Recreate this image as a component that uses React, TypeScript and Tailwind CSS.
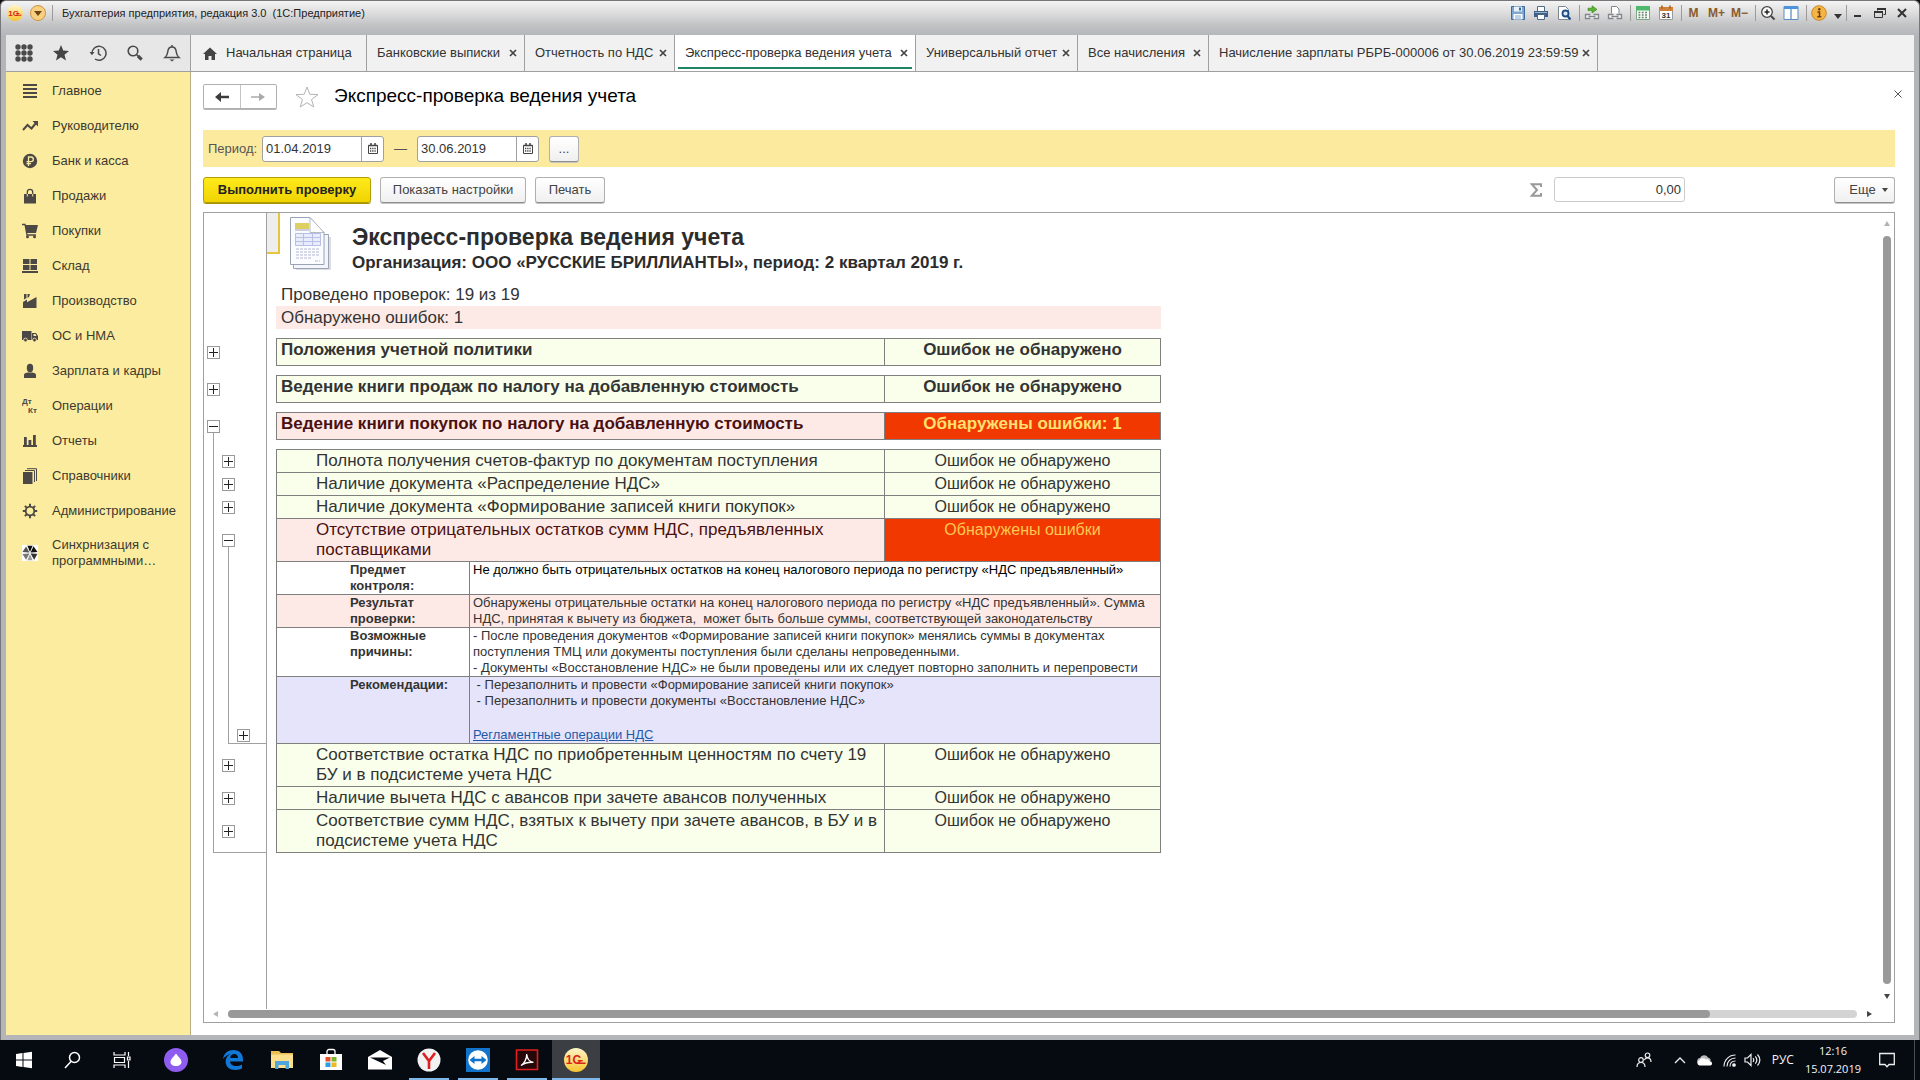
import type { ReactNode } from 'react';
import clsx from 'clsx';

type Slot = 'none' | 'plus' | 'plus-low' | 'minus' | 'line' | 'end';

interface IconProps {
  className?: string;
}

/* ---------- window title bar ---------- */

function LogoIcon({ className = 'size-4' }: IconProps) {
  return (
    <svg viewBox="0 0 20 20" className={className}>
      <defs>
        <linearGradient id="logo-fill" x1="0" y1="0" x2="0" y2="1">
          <stop offset="0" stopColor="#fff6c8" />
          <stop offset="1" stopColor="#f7c32e" />
        </linearGradient>
      </defs>
      <circle cx="10" cy="10" r="10" fill="url(#logo-fill)" />
      <text x="1.500" y="13.500" fontSize="10" fontWeight="bold" fontFamily="Liberation Sans" fill="#d8231c">1С</text>
      <path d="M11 12.700h7M11.500 10.700h4" stroke="#d8231c" strokeWidth="1.300" />
    </svg>
  );
}

function SaveIcon() {
  return (
    <svg viewBox="0 0 16 16" className="size-4">
      <path d="M1.500 1.500h13v13h-13z" fill="#7fa6d0" stroke="#3f6a9c" />
      <path d="M4 1.500h8v5H4z" fill="#e9f2fb" />
      <path d="M9 2.500h2v3H9z" fill="#3f6a9c" />
      <path d="M3.500 9h9v5.500h-9z" fill="#fff" />
      <path d="M5 11h6M5 13h6" stroke="#7fa6d0" />
    </svg>
  );
}

function PrinterIcon() {
  return (
    <svg viewBox="0 0 16 16" className="size-4">
      <path d="M4.500 1.500h7v5h-7z" fill="#fff" stroke="#4d6b8a" />
      <path d="M1 6h14v6H1z" fill="#3d5f85" />
      <path d="M2 7.500h12" stroke="#9db6d0" />
      <path d="M4.500 9.500h7v5h-7z" fill="#fff" stroke="#4d6b8a" />
    </svg>
  );
}

function PreviewIcon() {
  return (
    <svg viewBox="0 0 16 16" className="size-4">
      <path d="M2.500 1.500h7l3 3v10h-10z" fill="#fff" stroke="#7b8794" />
      <circle cx="9.500" cy="8.500" r="3" fill="#d9e9f8" stroke="#1d4e86" strokeWidth="1.800" />
      <path d="m11.500 11 3 3.500" stroke="#1d4e86" strokeWidth="2.200" />
    </svg>
  );
}

function LinkToIcon() {
  return (
    <svg viewBox="0 0 16 16" className="size-4">
      <path d="M4 3.200h4V.8L13 4.400 8 8V5.600H4z" fill="#5cb531" stroke="#35801a" strokeWidth=".6" />
      <path d="M2 9.500h12v4H2z" fill="#f4f4f4" />
      <path d="M6.500 9.500h-5v4h5M9.500 9.500h5v4h-5M4.500 11.500h7" fill="none" stroke="#80868c" strokeWidth="1.300" />
    </svg>
  );
}

function LinkPageIcon() {
  return (
    <svg viewBox="0 0 16 16" className="size-4">
      <path d="M4.500 8.500V1.500h5l2.500 2.500v4.500" fill="#fff" stroke="#80868c" />
      <path d="M2 9.500h12v4H2z" fill="#f4f4f4" />
      <path d="M6.500 9.500h-5v4h5M9.500 9.500h5v4h-5M4.500 11.500h7" fill="none" stroke="#80868c" strokeWidth="1.300" />
    </svg>
  );
}

function CalcIcon() {
  return (
    <svg viewBox="0 0 16 16" className="size-4">
      <path d="M1.500 1.500h13v13h-13z" fill="#f4faf4" stroke="#7fa488" />
      <path d="M1 1h14v4.500H1z" fill="#4fb86a" />
      <path d="M3.500 7.500h9M3.500 10h9M3.500 12.500h9" stroke="#5f7f68" strokeWidth="1.300" strokeDasharray="1.800 1.500" />
    </svg>
  );
}

function CalendarColorIcon() {
  return (
    <svg viewBox="0 0 16 16" className="size-4">
      <path d="M1.500 2.500h13v12h-13z" fill="#fff" stroke="#9a9a9a" />
      <path d="M1 2h14v4H1z" fill="#d08038" />
      <path d="M4 .5v3M12 .5v3" stroke="#a85c1c" strokeWidth="1.500" />
      <text x="8" y="13.300" textAnchor="middle" fontSize="8" fontFamily="Liberation Sans" fill="#333">31</text>
    </svg>
  );
}

function ZoomIcon() {
  return (
    <svg viewBox="0 0 16 16" className="size-4">
      <circle cx="7" cy="7" r="5.300" fill="#fafafa" stroke="#444" strokeWidth="1.300" />
      <path d="M4.500 7h5M7 4.500v5" stroke="#222" strokeWidth="1.500" />
      <path d="m11 11 3.500 3.500" stroke="#444" strokeWidth="2" />
    </svg>
  );
}

function PanelsIcon() {
  return (
    <svg viewBox="0 0 16 16" className="size-4">
      <path d="M1 1.500h14v13H1z" fill="#fff" stroke="#5b8fc4" />
      <path d="M1 1h14v3H1z" fill="#4c92dc" />
      <path d="M8 4v10" stroke="#5b8fc4" strokeWidth="1.300" />
    </svg>
  );
}

function InfoIcon() {
  return (
    <svg viewBox="0 0 16 16" className="size-4">
      <circle cx="8" cy="8" r="7.300" fill="#f5b544" stroke="#c9862a" />
      <circle cx="8.300" cy="4.300" r="1.200" fill="#6b3f0c" />
      <path d="M6.500 7h2v4.500M6.300 11.700h4" fill="none" stroke="#6b3f0c" strokeWidth="1.500" />
    </svg>
  );
}

function BarSeparator() {
  return <span className="h-4 w-px bg-[#9c9c9c]" />;
}

function ToolButton({ label, width = 'w-[23px]', children }: { label: string; width?: string; children: ReactNode }) {
  return (
    <button type="button" aria-label={label} className={clsx('flex h-5 items-center justify-center text-[12px] font-bold text-[#8a5a2c]', width)}>
      {children}
    </button>
  );
}

function TitleBar() {
  return (
    <header className="flex h-[34px] shrink-0 items-center justify-between pb-[10px] pl-px pr-[1px] text-[11px] text-[#222]">
      <div className="flex items-center">
        <LogoIcon className="size-4" />
        <button type="button" aria-label="Меню" className="ml-[7px] flex size-4 items-center justify-center rounded-full border border-[#cf9340] bg-[#f9cf80]">
          <svg viewBox="0 0 8 5" className="w-2">
            <path d="M0 0h8L4 5z" fill="#6b4618" />
          </svg>
        </button>
        <span className="mx-[6px] h-4 w-px bg-[#9c9c9c]" />
        <span className="ml-[3px] whitespace-pre">Бухгалтерия предприятия, редакция 3.0  (1С:Предприятие)</span>
      </div>
      <div className="flex items-center">
        <ToolButton label="Сохранить"><SaveIcon /></ToolButton>
        <ToolButton label="Печать"><PrinterIcon /></ToolButton>
        <ToolButton label="Просмотр"><PreviewIcon /></ToolButton>
        <span className="w-1" />
        <BarSeparator />
        <ToolButton label="Перейти по ссылке"><LinkToIcon /></ToolButton>
        <ToolButton label="Получить ссылку"><LinkPageIcon /></ToolButton>
        <span className="w-1" />
        <BarSeparator />
        <ToolButton label="Калькулятор"><CalcIcon /></ToolButton>
        <ToolButton label="Календарь"><CalendarColorIcon /></ToolButton>
        <span className="w-1" />
        <BarSeparator />
        <ToolButton label="Память">M</ToolButton>
        <ToolButton label="Прибавить">M+</ToolButton>
        <ToolButton label="Вычесть">M−</ToolButton>
        <span className="w-1" />
        <BarSeparator />
        <ToolButton label="Масштаб"><ZoomIcon /></ToolButton>
        <ToolButton label="Панели"><PanelsIcon /></ToolButton>
        <span className="w-1" />
        <BarSeparator />
        <ToolButton label="Справка"><InfoIcon /></ToolButton>
        <svg viewBox="0 0 8 5" className="mx-[4px] mt-[6px] w-2">
          <path d="M0 0h8L4 5z" fill="#333" />
        </svg>
        <BarSeparator />
        <ToolButton label="Свернуть" width="w-[22px]">
          <svg viewBox="0 0 12 12" className="size-3"><path d="M2 9h7" stroke="#333" strokeWidth="2" /></svg>
        </ToolButton>
        <ToolButton label="Восстановить" width="w-[22px]">
          <svg viewBox="0 0 12 12" className="size-3">
            <path d="M3.500 3.500v-2h8v6h-2M.500 4.500h8v6h-8z" fill="none" stroke="#333" />
            <path d="M0 5h9M3 2h9" stroke="#333" strokeWidth="2" />
          </svg>
        </ToolButton>
        <ToolButton label="Закрыть" width="w-[22px]">
          <svg viewBox="0 0 12 12" className="size-3"><path d="m2 2 8 8M10 2l-8 8" stroke="#333" strokeWidth="2" /></svg>
        </ToolButton>
      </div>
    </header>
  );
}

/* ---------- tabs ---------- */

const tabs = [
  { title: 'Банковские выписки', width: 'w-[158px]' },
  { title: 'Отчетность по НДС', width: 'w-[150px]' },
  { title: 'Экспресс-проверка ведения учета', width: 'w-[241px]', active: true },
  { title: 'Универсальный отчет', width: 'w-[162px]' },
  { title: 'Все начисления', width: 'w-[131px]' },
  { title: 'Начисление зарплаты РБРБ-000006 от 30.06.2019 23:59:59', width: 'w-[389px]' },
];

function CrossIcon({ className = 'size-2' }: IconProps) {
  return (
    <svg viewBox="0 0 8 8" className={className}>
      <path d="m1 1 6 6M7 1 1 7" stroke="#444" strokeWidth="1.700" />
    </svg>
  );
}

function TabStrip() {
  return (
    <div className="flex h-[37px] shrink-0 border-b border-[#a0a0a0] bg-[#f1f1f1] text-[13px] text-[#333]">
      <div className="flex w-[185px] shrink-0 items-center justify-between border-r border-[#a0a0a0] bg-[#e7e7e7] pl-[9px] pr-[9px]">
        <button type="button" aria-label="Разделы">
          <svg viewBox="0 0 18 18" className="size-[18px]" fill="#4a4a4a">
            {[3, 9, 15].map(y => [3, 9, 15].map(x => <circle key={`${x}-${y}`} cx={x} cy={y} r="2.700" />))}
          </svg>
        </button>
        <button type="button" aria-label="Избранное">
          <svg viewBox="0 0 18 18" className="size-[18px]">
            <path d="m9 1 2.200 5.500 5.800.4-4.500 3.800 1.500 5.800L9 13.300l-5 3.200 1.500-5.800L1 6.900l5.800-.4z" fill="#444" />
          </svg>
        </button>
        <button type="button" aria-label="История">
          <svg viewBox="0 0 18 18" className="size-[18px]" fill="none" stroke="#4a4a4a" strokeWidth="1.500">
            <path d="M3 9.500A7 7 0 1 1 6 15" />
            <path d="M9.500 5v4.800l2.500 1.700" />
            <path d="M.5 8h5L3 11.300z" fill="#4a4a4a" stroke="none" />
          </svg>
        </button>
        <button type="button" aria-label="Поиск">
          <svg viewBox="0 0 18 18" className="size-[18px]" fill="none" stroke="#4a4a4a">
            <circle cx="7" cy="7" r="4.800" strokeWidth="1.600" />
            <path d="m10.500 10.500 2 2" strokeWidth="1.600" />
            <path d="m12 12 3.700 3.700" strokeWidth="3.200" />
          </svg>
        </button>
        <button type="button" aria-label="Уведомления">
          <svg viewBox="0 0 18 18" className="size-[18px]" fill="none" stroke="#4a4a4a" strokeWidth="1.500">
            <path d="M2 13.500c2.500-2 2.500-3.500 2.800-6C5.100 4.500 6.500 3 9 3s3.900 1.500 4.200 4.500c.3 2.500.3 4 2.800 6z" />
            <path d="M9 1v2" />
            <path d="M6.500 15.500h5L9 17.500z" fill="#4a4a4a" stroke="none" />
          </svg>
        </button>
      </div>
      <a href="#home" className="flex w-[176px] shrink-0 items-center gap-[9px] border-r border-[#a0a0a0] pl-3">
        <svg viewBox="0 0 14 13" className="h-[13px] w-[14px]">
          <path d="M7 .5 14 7h-2v6H8.500V9h-3v4H2V7H0z" fill="#444" />
        </svg>
        Начальная страница
      </a>
      {tabs.map(tab => (
        <div
          key={tab.title}
          className={clsx('relative flex shrink-0 items-center justify-between border-r border-[#a0a0a0] pl-[10px] pr-[7px] whitespace-nowrap', tab.width, tab.active && 'bg-white')}
        >
          <a href="#tab">{tab.title}</a>
          <button type="button" aria-label="Закрыть вкладку"><CrossIcon /></button>
          {tab.active && <span className="absolute bottom-[2px] left-[3px] right-[3px] h-[2px] bg-[#1f8565]" />}
        </div>
      ))}
    </div>
  );
}

/* ---------- sections panel ---------- */

const ink = '#4c4846';

const sections: { title: string; icon: ReactNode }[] = [
  { title: 'Главное', icon: <path d="M1 2h14M1 6h14M1 10h14M1 14h14" stroke={ink} strokeWidth="2" /> },
  {
    title: 'Руководителю',
    icon: (
      <>
        <path d="m1 12 4.500-5 4 3.500L14 5" fill="none" stroke={ink} strokeWidth="2" />
        <path d="M10.500 3H16v5.500z" fill={ink} />
      </>
    ),
  },
  {
    title: 'Банк и касса',
    icon: (
      <>
        <circle cx="8" cy="8" r="7.200" fill={ink} />
        <path d="M6.500 13V4H9a2.300 2.300 0 0 1 0 4.700H4.500M4.500 10.700H9" fill="none" stroke="#fcec9f" strokeWidth="1.300" />
      </>
    ),
  },
  {
    title: 'Продажи',
    icon: (
      <>
        <path d="M2 6h12v9.500H2z" fill={ink} />
        <path d="M5.300 8V4a2.700 2.700 0 0 1 5.400 0v4" fill="none" stroke={ink} strokeWidth="1.300" />
        <path d="M5.300 6v2.500M10.700 6v2.500" stroke="#fcec9f" />
      </>
    ),
  },
  {
    title: 'Покупки',
    icon: (
      <>
        <path d="M3 2h13l-2 8H4.500z" fill={ink} />
        <path d="M0 1.500h3l2 10.500h9" fill="none" stroke={ink} strokeWidth="1.300" />
        <circle cx="5.500" cy="13.800" r="1.500" fill={ink} />
        <circle cx="12.500" cy="13.800" r="1.500" fill={ink} />
      </>
    ),
  },
  { title: 'Склад', icon: <path d="M1 1h6.500v5H1zM8.500 1H15v5H8.500zM1 7h6.500v5H1zM8.500 7H15v5H8.500zM0 13h16v2H0z" fill={ink} /> },
  { title: 'Производство', icon: <path d="M1 15V9l4-2.500v2.700L14.500 4v11zM2 1h2.500v4L2 6.500zM5.500 1H8l-1 3-1.500 1z" fill={ink} /> },
  {
    title: 'ОС и НМА',
    icon: (
      <>
        <path d="M0 3h9.500v9H0zM10 5h4l2 3v4h-6z" fill={ink} />
        <path d="M11.500 6h2l1 2h-3z" fill="#fcec9f" />
        <circle cx="3.500" cy="12" r="1.900" fill={ink} stroke="#fcec9f" strokeWidth=".8" />
        <circle cx="12.500" cy="12" r="1.900" fill={ink} stroke="#fcec9f" strokeWidth=".8" />
      </>
    ),
  },
  {
    title: 'Зарплата и кадры',
    icon: (
      <>
        <ellipse cx="8" cy="5" rx="3.200" ry="4.200" fill={ink} />
        <path d="M2 15v-3c0-2 3-2.500 6-2.500s6 .5 6 2.500v3z" fill={ink} />
      </>
    ),
  },
  {
    title: 'Операции',
    icon: (
      <g fontFamily="Liberation Sans" fontSize="8" fontWeight="bold" fill={ink}>
        <text x="0" y="6">Дт</text>
        <text x="6" y="15">Кт</text>
      </g>
    ),
  },
  { title: 'Отчеты', icon: <path d="M2 4h2.800v8H2zM6.500 7h2.800v5H6.500zM11 2h2.800v10H11zM1 12h14v2H1z" fill={ink} /> },
  {
    title: 'Справочники',
    icon: (
      <>
        <path d="M1 4h9.500v12H1z" fill={ink} />
        <path d="M3 2.500h9.500V14M5 .7h9.500V13" fill="none" stroke={ink} />
      </>
    ),
  },
  {
    title: 'Администрирование',
    icon: (
      <>
        <circle cx="8" cy="8" r="4.300" fill="none" stroke={ink} strokeWidth="1.800" />
        <path d="M8 .8V4M8 12v3.200M.8 8H4M12 8h3.200M2.900 2.900l2.200 2.200M10.900 10.900l2.200 2.200M13.100 2.900l-2.200 2.200M5.100 10.900l-2.200 2.200" stroke={ink} strokeWidth="2" />
      </>
    ),
  },
  {
    title: 'Синхрнизация с программными…',
    icon: (
      <>
        <path d="M0 0h16v16H0z" fill="#fff" />
        <path d="M8 8 5 .8h6zM8 8l3.500-6.800L15.500 7z" fill="#111" />
        <path d="m8 8 7.500.7-3.300 6z" fill="#333" />
        <path d="m8 8 3 7.300H5z" fill="#999" />
        <path d="m8 8-4 6.800L.5 9z" fill="#777" />
        <path d="M8 8 .5 7 4 1.500z" fill="#555" />
        <path d="m5 .8 6 14.500M11 .8 5 15.300M.5 8h15" stroke="#fff" strokeWidth=".8" />
      </>
    ),
  },
];

function SectionsPanel() {
  return (
    <nav className="w-[185px] shrink-0 border-r border-[#b8ae84] bg-[#fcec9f] pt-[1px] text-[13px] text-[#3d3a30]">
      {sections.map(section => (
        <a key={section.title} href="#section" className="flex min-h-[35px] items-center py-[9px] pl-4 leading-4">
          <svg viewBox="0 0 16 16" className="mr-[14px] size-4 shrink-0">{section.icon}</svg>
          <span className="w-[125px]">{section.title}</span>
        </a>
      ))}
    </nav>
  );
}

/* ---------- form header ---------- */

const buttonBase = 'flex h-[26px] items-center justify-center rounded-[3px] border border-[#b0b0b0] border-b-[#8f8f8f] bg-linear-to-b from-white to-[#f0f0f0] text-[13px] text-[#444] shadow-[0_1px_0_#c4c4c4]';

function DateField({ id, label, value }: { id: string; label: string; value: string }) {
  return (
    <div className="flex h-[26px] w-[122px] items-center rounded-[3px] border border-[#a0a0a0] bg-white">
      <input id={id} aria-label={label} defaultValue={value} className="h-full w-[99px] border-r border-[#a0a0a0] pl-[3px] text-[13px] text-[#333] outline-none" />
      <button type="button" aria-label="Выбрать дату" className="flex h-full flex-1 items-center justify-center">
        <svg viewBox="0 0 10 11" className="h-[11px] w-[10px]">
          <path d="M.5 2.500h9v8h-9z" fill="none" stroke="#444" />
          <path d="M.5 2.500h9M3 0v2M7 0v2" stroke="#444" strokeWidth="1.500" />
          <path d="M2 5.500h6M2 8h6" stroke="#444" strokeWidth="1.300" strokeDasharray="1.300 .9" />
        </svg>
      </button>
    </div>
  );
}

function FormHeader() {
  return (
    <div className="flex h-[58px] items-center pb-[9px]">
      <div className="flex h-[25px] w-[74px] rounded-[2px] border border-[#b0b0b0] shadow-[0_1px_0_#b4b4b4]">
        <button type="button" aria-label="Назад" className="flex flex-1 items-center justify-center border-r border-[#c4c4c4]">
          <svg viewBox="0 0 14 10" className="h-[10px] w-[14px]"><path d="M6 0v3.700h8v2.600H6V10L0 5z" fill="#3c3c3c" /></svg>
        </button>
        <button type="button" aria-label="Вперед" className="flex flex-1 items-center justify-center">
          <svg viewBox="0 0 14 10" className="h-[10px] w-[14px]"><path d="M8 1v3.200H0v1.600h8V9l6-4z" fill="#aaa" /></svg>
        </button>
      </div>
      <button type="button" aria-label="В избранное" className="ml-[18px]">
        <svg viewBox="0 0 24 22" className="h-[22px] w-[24px]">
          <path d="m12 1 2.800 7.300 8.200.3-6.500 4.900L18.800 21 12 16.700 5.200 21l2.300-7.500L1 8.600l8.200-.3z" fill="#fff" stroke="#b4b4b4" />
        </svg>
      </button>
      <h1 className="ml-[15px] text-[19px] text-black">Экспресс-проверка ведения учета</h1>
      <button type="button" aria-label="Закрыть" className="mb-[5px] ml-auto mr-[-7px]">
        <svg viewBox="0 0 8 8" className="size-2"><path d="m.5.5 7 7M7.500.5l-7 7" stroke="#555" /></svg>
      </button>
    </div>
  );
}

function PeriodBar() {
  return (
    <div className="flex h-[37px] items-center bg-[#fcea9f] pl-[5px] text-[13px] text-[#555]">
      <label htmlFor="date-from" className="w-[54px]">Период:</label>
      <DateField id="date-from" label="Начало периода" value="01.04.2019" />
      <span className="w-[33px] text-center">—</span>
      <DateField id="date-to" label="Конец периода" value="30.06.2019" />
      <button type="button" className={clsx(buttonBase, 'ml-[10px] w-[30px]')}>...</button>
    </div>
  );
}

function CommandBar() {
  return (
    <div className="flex h-[45px] items-center gap-[9px]">
      <button type="button" className="flex h-[26px] w-[168px] items-center justify-center rounded-[3px] border border-[#b39d00] bg-linear-to-b from-[#ffea1a] to-[#f0d400] text-[13px] font-bold text-[#222] shadow-[0_1px_0_#a89400]">
        Выполнить проверку
      </button>
      <button type="button" className={clsx(buttonBase, 'w-[146px]')}>Показать настройки</button>
      <button type="button" className={clsx(buttonBase, 'w-[70px]')}>Печать</button>
      <div className="ml-auto flex items-center">
        <label htmlFor="sum" className="mr-[12px]">
          <svg viewBox="0 0 12 14" className="h-[14px] w-3"><path d="M11 4V1.200H1.800L7 7l-5.200 5.800H11V10" fill="none" stroke="#999" strokeWidth="2" /></svg>
        </label>
        <input id="sum" aria-label="Сумма" defaultValue="0,00" className="h-[25px] w-[131px] rounded-[3px] border border-[#ccc] pr-[3px] text-right text-[13px] text-[#333] outline-none" />
        <button type="button" className={clsx(buttonBase, 'ml-[149px] w-[61px] gap-[6px] pl-2')}>
          Еще
          <svg viewBox="0 0 6 4" className="w-[6px]"><path d="M0 0h6L3 4z" fill="#444" /></svg>
        </button>
      </div>
    </div>
  );
}

/* ---------- report ---------- */

function TreeSlot({ slot }: { slot: Slot }) {
  const box = slot === 'plus' || slot === 'plus-low' || slot === 'minus';
  return (
    <div className="flex w-[15px] flex-col items-start">
      <span className={clsx('ml-[6px] w-px flex-1', (slot === 'line' || slot === 'end') && 'bg-[#a0a0a0]')} />
      {box && (
        <button type="button" aria-label={slot === 'minus' ? 'Свернуть' : 'Развернуть'} className="size-[13px] border border-[#999] bg-white">
          <svg viewBox="0 0 11 11" className="size-[11px]">
            <path d={slot === 'minus' ? 'M1 5.500h9' : 'M1 5.500h9M5.500 1v9'} stroke="#222" />
          </svg>
        </button>
      )}
      {box && <span className={clsx('ml-[6px] w-px', slot === 'plus-low' ? 'h-[2px]' : 'flex-1', slot === 'minus' && 'bg-[#a0a0a0]')} />}
    </div>
  );
}

/* Level marks to the left of a row; a closed branch ends in a foot that reaches the table side. */
function Gutter({ slots = [], height }: { slots?: Slot[]; height: string }) {
  const end = slots.indexOf('end');
  return (
    <td className="border-r border-[#a0a0a0] p-0">
      <div className={clsx('relative flex pl-[3px]', height)}>
        {slots.map((slot, i) => <TreeSlot key={i} slot={slot} />)}
        {end >= 0 && <span className={clsx('absolute bottom-0 right-0 h-px bg-[#a0a0a0]', end === 0 ? 'left-[9px]' : 'left-[24px]')} />}
      </div>
    </td>
  );
}

const line = 'border-[#7f7f7f]';

function SpacerRow({ slots, height = 'h-[9px]' }: { slots?: Slot[]; height?: string }) {
  return (
    <tr>
      <Gutter slots={slots} height={height} />
      <td colSpan={4} className="p-0" />
    </tr>
  );
}

function GroupRow({ title, status, error, slots }: { title: string; status: string; error?: boolean; slots: Slot[] }) {
  return (
    <tr className="text-[17px] font-bold leading-5">
      <Gutter slots={slots} height="h-7" />
      <td className="p-0" />
      <td colSpan={2} className={clsx('border px-1 pt-px pb-0 align-top', line, error ? 'bg-[#fdeae6] text-[#4a1010]' : 'bg-[#f9ffeb]')}>{title}</td>
      <td className={clsx('border border-l-0 p-0 pt-px text-center align-top', line, error ? 'bg-[#f03800] text-[#ffe070]' : 'bg-[#f9ffeb]')}>{status}</td>
    </tr>
  );
}

interface CheckRowProps {
  title: string;
  slots: Slot[];
  height: string;
  first?: boolean;
  error?: boolean;
}

function CheckRow({ title, slots, height, first, error }: CheckRowProps) {
  return (
    <tr className="leading-5">
      <Gutter slots={slots} height={height} />
      <td className="p-0" />
      <td
        colSpan={2}
        className={clsx('border-x border-b pt-px pr-1 pb-0 pl-[39px] align-top text-[17px]', line, first && 'border-t', error ? 'bg-[#fdeae6] text-[#4a1010]' : 'bg-[#f9ffeb]')}
      >
        {title}
      </td>
      <td className={clsx('border-r border-b p-0 pt-px text-center align-top text-[16px]', line, first && 'border-t', error ? 'bg-[#f03800] text-[#ffc850]' : 'bg-[#f9ffeb]')}>
        {error ? 'Обнаружены ошибки' : 'Ошибок не обнаружено'}
      </td>
    </tr>
  );
}

interface DetailRowProps {
  title: string;
  height: string;
  color: string;
  slots?: Slot[];
  children: ReactNode;
}

function DetailRow({ title, height, color, slots = ['line', 'line'], children }: DetailRowProps) {
  return (
    <tr className={clsx('text-[13px] leading-4', color)}>
      <Gutter slots={slots} height={height} />
      <td className="bg-white p-0" />
      <td className={clsx('border-x border-b py-0 pr-0 pl-[73px] align-top font-bold', line)}>{title}</td>
      <td colSpan={2} className={clsx('border-r border-b py-0 pr-1 pl-[3px] align-top whitespace-pre', line)}>{children}</td>
    </tr>
  );
}

function ReportIcon() {
  return (
    <svg viewBox="0 0 42 54" className="h-[54px] w-[42px]">
      <path d="M6 20h35v33H6z" fill="#b8bcc4" opacity=".5" />
      <path d="M3.500 17.500h35v34h-35z" fill="#f3f5fa" stroke="#9aa4b4" />
      <path d="M.5.5H20l14 15v32H.5z" fill="#fbfcff" stroke="#9aa4b4" />
      <path d="M20 .5v15h14z" fill="#fff" stroke="#b4bac6" />
      <path d="M5 6h14v6H5z" fill="#ddd060" />
      <path d="M5 13h14" stroke="#999ec8" />
      <path d="M5.500 16.500h25v12h-25zM5.500 20.500h25M5.500 24.500h25M13.500 16.500v12M22.500 16.500v12" fill="#e9ecfb" stroke="#b9bfe4" />
      <path d="M6 32h24M6 35h24M6 38h24M6 41h16M25 44h5" stroke="#b4b8d4" strokeDasharray="3 1" />
    </svg>
  );
}

function Report() {
  return (
    <div className="flex min-w-0 flex-1 flex-col">
      <div className="flex h-[70px] shrink-0">
        <div className="w-[63px] border-r border-[#a0a0a0]" />
        <div className="h-[41px] w-[13px] border-r-2 border-b-2 border-[#e8c63c] bg-[#eee]" />
        <div className="ml-[10px] mt-[4px]"><ReportIcon /></div>
        <div className="ml-[20px] pt-[10px] font-bold text-[#2c2c2c]">
          <h2 className="text-[23px] leading-[28px]">Экспресс-проверка ведения учета</h2>
          <p className="text-[17px] leading-6">Организация: ООО «РУССКИЕ БРИЛЛИАНТЫ», период: 2 квартал 2019 г.</p>
        </div>
      </div>
      <table className="w-[957px] table-fixed border-separate border-spacing-0 text-[#333]">
        <colgroup>
          <col className="w-[63px]" />
          <col className="w-[9px]" />
          <col className="w-[194px]" />
          <col className="w-[415px]" />
          <col className="w-[276px]" />
        </colgroup>
        <tbody>
          <tr className="text-[17px] leading-5">
            <Gutter height="h-[23px]" />
            <td className="p-0" />
            <td colSpan={3} className="px-[5px] py-0">Проведено проверок: 19 из 19</td>
          </tr>
          <tr className="text-[17px] leading-5">
            <Gutter height="h-[23px]" />
            <td className="p-0" />
            <td colSpan={3} className="bg-[#fdeae6] px-[5px] py-0">Обнаружено ошибок: 1</td>
          </tr>
          <SpacerRow />
          <GroupRow title="Положения учетной политики" status="Ошибок не обнаружено" slots={['plus']} />
          <SpacerRow />
          <GroupRow title="Ведение книги продаж по налогу на добавленную стоимость" status="Ошибок не обнаружено" slots={['plus']} />
          <SpacerRow />
          <GroupRow title="Ведение книги покупок по налогу на добавленную стоимость" status="Обнаружены ошибки: 1" error slots={['minus']} />
          <SpacerRow slots={['line']} />
          <CheckRow first title="Полнота получения счетов-фактур по документам поступления" height="h-6" slots={['line', 'plus']} />
          <CheckRow title="Наличие документа «Распределение НДС»" height="h-[23px]" slots={['line', 'plus']} />
          <CheckRow title="Наличие документа «Формирование записей книги покупок»" height="h-[23px]" slots={['line', 'plus']} />
          <CheckRow error title="Отсутствие отрицательных остатков сумм НДС, предъявленных поставщиками" height="h-[43px]" slots={['line', 'minus']} />
          <DetailRow title="Предмет контроля:" height="h-[33px]" color="[&>td:last-child]:text-black">
            Не должно быть отрицательных остатков на конец налогового периода по регистру «НДС предъявленный»
          </DetailRow>
          <DetailRow title="Результат проверки:" height="h-[33px]" color="[&>td:nth-child(n+3)]:bg-[#fdeae6]">
            Обнаружены отрицательные остатки на конец налогового периода по регистру «НДС предъявленный». Сумма<br />
            {'НДС, принятая к вычету из бюджета,  может быть больше суммы, соответствующей законодательству'}
          </DetailRow>
          <DetailRow title="Возможные причины:" height="h-[49px]" color="bg-white">
            - После проведения документов «Формирование записей книги покупок» менялись суммы в документах<br />
            поступления ТМЦ или документы поступления были сделаны непроведенными.<br />
            - Документы «Восстановление НДС» не были проведены или их следует повторно заполнить и перепровести
          </DetailRow>
          <DetailRow title="Рекомендации:" height="h-[67px]" color="[&>td:nth-child(n+3)]:bg-[#e6e4fa]" slots={['line', 'end', 'plus-low']}>
            {' - Перезаполнить и провести «Формирование записей книги покупок»\n - Перезаполнить и провести документы «Восстановление НДС»'}
            <a href="#operations" className="mt-[18px] block text-[#1f5aa8] underline">Регламентные операции НДС</a>
          </DetailRow>
          <CheckRow title="Соответствие остатка НДС по приобретенным ценностям по счету 19 БУ и в подсистеме учета НДС" height="h-[43px]" slots={['line', 'plus']} />
          <CheckRow title="Наличие вычета НДС с авансов при зачете авансов полученных" height="h-[23px]" slots={['line', 'plus']} />
          <CheckRow title="Соответствие сумм НДС, взятых к вычету при зачете авансов, в БУ и в подсистеме учета НДС" height="h-[43px]" slots={['end', 'plus']} />
        </tbody>
      </table>
      <div className="w-[63px] flex-1 border-r border-[#a0a0a0]" />
    </div>
  );
}

function ReportFrame() {
  return (
    <div className="flex min-h-0 flex-1 flex-col border border-[#a0a0a0]">
      <div className="flex min-h-0 flex-1">
        <Report />
        <div className="flex w-[14px] flex-col items-center pt-[8px]">
          <svg viewBox="0 0 6 5" className="w-[6px]"><path d="M0 5h6L3 0z" fill="#b4b4b4" /></svg>
          <div className="mt-[10px] mb-[10px] w-2 flex-1 rounded-full bg-[#999]" />
          <svg viewBox="0 0 6 5" className="w-[6px]"><path d="M0 0h6L3 5z" fill="#444" /></svg>
          <div className="h-[10px]" />
        </div>
      </div>
      <div className="flex h-[13px] shrink-0 items-center pb-[3px] pl-[9px] pr-[22px]">
        <svg viewBox="0 0 5 6" className="h-[6px] w-[5px]"><path d="M5 0v6L0 3z" fill="#b4b4b4" /></svg>
        <div className="mx-[10px] h-2 flex-1 rounded-full bg-[#d4d4d4]">
          <div className="h-2 w-[91%] rounded-full bg-[#999]" />
        </div>
        <svg viewBox="0 0 5 6" className="h-[6px] w-[5px]"><path d="M0 0v6l5-3z" fill="#444" /></svg>
      </div>
    </div>
  );
}

/* ---------- taskbar ---------- */

const apps: { title: string; state?: 'open' | 'active'; icon: ReactNode }[] = [
  { title: 'Пуск', icon: <path d="m4 6 6.500-1v6.500H4zM11.500 4.900 20 3.700v7.800h-8.500zM4 12.500h6.500V19L4 18zM11.500 12.500H20v7.800l-8.500-1.200z" fill="#fff" /> },
  { title: 'Поиск', icon: <path d="M18.500 9.500a5 5 0 1 1-10 0 5 5 0 0 1 10 0ZM10 13.500 4 20" fill="none" stroke="#fff" strokeWidth="1.500" /> },
  {
    title: 'Представление задач',
    icon: <path d="M4 4v3h11V4M4 20v-3h11v3M4.500 9.500h10v5h-10zM18.500 4v4M18.500 13v7M17.500 9h2.500v3h-2.500z" fill="none" stroke="#fff" strokeWidth="1.200" />,
  },
  {
    title: 'Алиса',
    icon: (
      <>
        <circle cx="12" cy="12" r="12" fill="#8f5cf0" />
        <path d="M12 5.500c2.500 3.500 5.500 5.500 5.500 8.500 0 2.500-2.500 4-5.500 4s-5.500-1.500-5.500-4c0-3 3-5 5.500-8.500z" fill="#fff" />
      </>
    ),
  },
  {
    title: 'Edge',
    icon: <path d="M2 11C3 5 7 2 12.500 2 18.500 2 22 6 22 11.500v2H9c.3 3 3 4.500 6 4.500 2.300 0 4.300-.6 6-1.600v4.200C19.200 21.500 17 22 14.500 22 8.500 22 4.600 18.500 4.600 13.500c0-3.500 2-6 5-7.500C6.500 6.500 4 8.500 2 11zm7.200-1H17c0-2.500-1.500-4-3.700-4-2.300 0-3.700 1.500-4.100 4z" fill="#1278d7" />,
  },
  {
    title: 'Проводник',
    icon: (
      <>
        <path d="M1 3h8l2 2h12v15H1z" fill="#e9bf54" />
        <path d="M1 6.500h22V20H1z" fill="#fbdf8c" />
        <path d="M5 21v-8h14v8h-3.500v-4h-7v4z" fill="#4ea6dc" />
      </>
    ),
  },
  {
    title: 'Магазин',
    icon: (
      <>
        <path d="M1 6h22v16H1z" fill="#fff" />
        <path d="M8 6V3.500a2 2 0 0 1 2-2h4a2 2 0 0 1 2 2V6" fill="none" stroke="#fff" strokeWidth="1.300" />
        <path d="M6.500 9h5v4.500h-5z" fill="#e8502c" />
        <path d="M12.500 9h5v4.500h-5z" fill="#79b62a" />
        <path d="M6.500 14.500h5V19h-5z" fill="#2b9fe0" />
        <path d="M12.500 14.500h5V19h-5z" fill="#f3b620" />
      </>
    ),
  },
  {
    title: 'Почта',
    icon: (
      <>
        <path d="M0 9 12 2l12 7v12.500H0z" fill="#fff" />
        <path d="M2 9.500h20l-7 3.500 3 4z" fill="#060b12" />
      </>
    ),
  },
  {
    title: 'Яндекс Браузер',
    state: 'open',
    icon: (
      <>
        <circle cx="12" cy="12" r="11.500" fill="#f2f2f2" />
        <path d="m6 5 6 8 6-8M12 13v8" fill="none" stroke="#e02020" strokeWidth="2.600" />
      </>
    ),
  },
  {
    title: 'TeamViewer',
    state: 'open',
    icon: (
      <>
        <path d="M0 0h24v24H0z" fill="#1273ca" />
        <circle cx="12" cy="12" r="9.800" fill="#fff" />
        <path d="m3.500 12 5-4v2.700h7V8l5 4-5 4v-2.700h-7V16z" fill="#1273ca" />
      </>
    ),
  },
  {
    title: 'Acrobat Reader',
    state: 'open',
    icon: (
      <>
        <path d="M1.500 2h21v19.500h-21z" fill="#260808" stroke="#e02020" strokeWidth="1.600" />
        <path d="M6 17.500c3-1.500 6-7 5.700-11.500.5 5 3 8 6.800 8.300-4.500-.3-9 .7-12.500 3.200z" fill="none" stroke="#fff" strokeWidth="1.300" />
      </>
    ),
  },
  { title: '1С:Предприятие', state: 'active', icon: <LogoIcon className="size-6" /> },
];

function Taskbar() {
  return (
    <footer className="flex h-10 shrink-0 items-stretch bg-[#060b12] text-[#f4f4f4]">
      {apps.map((app, i) => (
        <button
          key={app.title}
          type="button"
          aria-label={app.title}
          className={clsx('relative flex w-12 items-center justify-center', i === 3 ? 'ml-[5px] mr-[9px]' : 'mr-[1px]', app.state === 'active' && 'bg-[#3b3e42]')}
        >
          <svg viewBox="0 0 24 24" className="size-6">{app.icon}</svg>
          {app.state && <span className={clsx('absolute bottom-0 h-[2px] bg-[#7fb8ea]', app.state === 'active' ? 'w-12' : 'w-10')} />}
        </button>
      ))}
      <div className="ml-auto flex items-center font-['Open_Sans',sans-serif] text-[12px]">
        <svg viewBox="0 0 16 16" className="mr-[22px] size-4" fill="none" stroke="#eee" strokeWidth="1.200">
          <circle cx="5" cy="8" r="2.300" />
          <path d="M1 15c0-3 1.500-4.500 4-4.500S9 12 9 15" />
          <circle cx="11.500" cy="3.300" r="2.300" />
          <path d="M8.300 8c.6-1.500 1.600-2.200 3.200-2.200 2.300 0 3.500 1.500 3.500 4.200" />
        </svg>
        <svg viewBox="0 0 12 8" className="mr-[10px] h-2 w-3"><path d="m1 7 5-5 5 5" fill="none" stroke="#eee" strokeWidth="1.300" /></svg>
        <svg viewBox="0 0 17 12" className="mr-[10px] h-3 w-[17px]">
          <path d="M2.500 9.500A3 3 0 0 1 4 4a4.500 4.500 0 0 1 8-.5 4 4 0 0 1 3 3z" fill="#bbb" />
          <path d="M3.500 11.500a2.700 2.700 0 0 1 0-5.300 4 4 0 0 1 6.500-.7 3.500 3.500 0 0 1 4 1.700 2.200 2.200 0 0 1 .5 4.300z" fill="#fff" />
        </svg>
        <svg viewBox="0 0 13 13" className="mr-[8px] size-[13px]" fill="none" stroke="#eee" strokeWidth="1.100">
          <path d="M1 12.500C1 6 6 1 12.500 1M4 12.500c0-5 3.500-8.500 8.500-8.500M7 12.500C7 9 9 7 12.500 7" />
          <circle cx="11" cy="11" r="1.300" fill="#eee" />
        </svg>
        <svg viewBox="0 0 17 14" className="mr-[11px] h-[14px] w-[17px]" fill="none" stroke="#eee" strokeWidth="1.200">
          <path d="M1 5h2.500L7 1.500v11L3.500 9H1zM9 5c1 1.300 1 2.700 0 4M11.300 3.300c2 2.400 2 5 0 7.400M13.500 1.500c3 3.500 3 7.500 0 11" />
        </svg>
        <span className="mr-[11px]">РУС</span>
        <time className="mr-[18px] text-center text-[11px] leading-[18px]">12:16<br />15.07.2019</time>
        <svg viewBox="0 0 16 16" className="mr-[19px] size-4"><path d="M.7 1.500h14.600v11H10L8 14.800 6 12.500H.7z" fill="none" stroke="#eee" strokeWidth="1.300" /></svg>
        <span className="mr-[5px] h-10 w-px bg-[#4a4d50]" />
      </div>
    </footer>
  );
}

export default function App() {
  return (
    <div className="flex h-screen flex-col bg-[#111] font-['Liberation_Sans',Arial,sans-serif]">
      <div className="flex min-h-0 flex-1 flex-col rounded-t-[6px] border-x border-t border-[#77777b] bg-[#b4b5b9] bg-[linear-gradient(#f4f4f4,#d9d9da_14px,#c2c3c5_24px,#b4b5b9_35px)] px-[5px] pb-[5px]">
        <TitleBar />
        <TabStrip />
        <div className="flex min-h-0 flex-1 bg-white">
          <SectionsPanel />
          <main className="flex min-w-0 flex-1 flex-col pb-[12px] pl-[12px] pr-[19px]">
            <FormHeader />
            <PeriodBar />
            <CommandBar />
            <ReportFrame />
          </main>
        </div>
      </div>
      <Taskbar />
    </div>
  );
}
